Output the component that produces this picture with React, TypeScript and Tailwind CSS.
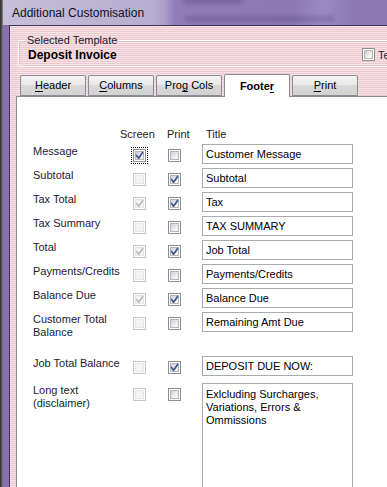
import React from "react";

type Box = { c?: boolean; d?: boolean; focus?: boolean };

type Row = {
  label: string[];
  screen: Box;
  print: Box;
  title: string;
  h: string;
};

const rows: Row[] = [
  { label: ["Message"], screen: { c: true, focus: true }, print: {}, title: "Customer Message", h: "h-[24px]" },
  { label: ["Subtotal"], screen: { d: true }, print: { c: true }, title: "Subtotal", h: "h-[24px]" },
  { label: ["Tax Total"], screen: { c: true, d: true }, print: { c: true }, title: "Tax", h: "h-[24px]" },
  { label: ["Tax Summary"], screen: { d: true }, print: {}, title: "TAX SUMMARY", h: "h-[24px]" },
  { label: ["Total"], screen: { c: true, d: true }, print: { c: true }, title: "Job Total", h: "h-[24px]" },
  { label: ["Payments/Credits"], screen: { d: true }, print: {}, title: "Payments/Credits", h: "h-[24px]" },
  { label: ["Balance Due"], screen: { c: true, d: true }, print: { c: true }, title: "Balance Due", h: "h-[24px]" },
  { label: ["Customer Total", "Balance"], screen: { d: true }, print: {}, title: "Remaining Amt Due", h: "h-[44px]" },
  { label: ["Job Total Balance"], screen: { d: true }, print: { c: true }, title: "DEPOSIT DUE NOW:", h: "h-[27px]" },
];

const stripes =
  "bg-[image:repeating-linear-gradient(to_bottom,#f8e3e6_0px,#f8e3e6_1px,#ecc9ce_1px,#ecc9ce_2px)] bg-fixed";

function Check({ c, d, focus }: Box) {
  return (
    <span
      className={`relative block w-[13px] h-[13px] border p-[1px] ${
        d ? "border-[#c6c6c6] bg-[#fbfbfb]" : "border-[#8e8f8f] bg-white"
      } ${focus ? "outline-1 outline-dotted outline-black outline-offset-[1px]" : ""}`}
    >
      <span
        className={`block w-full h-full border ${
          d
            ? "border-[#e6e6e6] bg-[#f4f4f4]"
            : "border-[#b4b6b9] bg-[linear-gradient(135deg,#cdd0d5,#eeeeee_60%,#f7f7f7)]"
        }`}
      />
      {c && (
        <svg viewBox="0 0 13 13" className="absolute -inset-px w-[13px] h-[13px]">
          <path
            d="M3.5 6.5 L5.6 9.2 L9.6 3.4"
            fill="none"
            stroke={d ? "#bdbdbd" : "#3c5394"}
            strokeWidth="1.7"
            strokeLinecap="round"
            strokeLinejoin="round"
          />
        </svg>
      )}
    </span>
  );
}

function Tab({ children, active }: { children: React.ReactNode; active?: boolean }) {
  return (
    <div
      className={`w-[66px] shrink-0 flex items-center justify-center border border-[#898c95] rounded-t-[2px] text-[11px] leading-[13px] text-black ${
        active
          ? "h-[23px] bg-white border-b-0 font-bold relative z-10 -mb-px"
          : "h-[21px] bg-[linear-gradient(to_bottom,#f4f4f4,#e9e9e9_45%,#d9d9d9_50%,#d2d2d2)]"
      }`}
    >
      <span>{children}</span>
    </div>
  );
}

export default function App() {
  return (
    <div className="w-[387px] h-[487px] overflow-hidden flex font-['Liberation_Sans',Arial,sans-serif] text-[#1b1b30]">
      {/* outer window edge */}
      <div className="w-[3px] shrink-0 bg-[linear-gradient(to_right,#2f2f2f,#555_66%,#9a93a8)]" />

      <div className="flex-1 flex flex-col min-w-0">
        {/* title bar */}
        <div className="relative h-[25px] shrink-0 flex items-center pl-[9px] bg-[linear-gradient(to_right,#c6bfda_0px,#b7add0_150px,#ab9fca_162px,#8f7bb6_172px,#8c78b3_290px,#9a8bc6_320px,#8c78b3_350px)] overflow-hidden">
          <div className="absolute left-[180px] -top-[2px] w-[60px] h-[6px] rounded-full bg-[#5a4a7e] opacity-40 blur-[2px]" />
          <div className="absolute left-[182px] top-[16px] w-[150px] h-[6px] rounded-full bg-[#5a4a7e] opacity-35 blur-[2px]" />
          <span className="relative text-[12px] leading-[14px] text-[#111122]">Additional Customisation</span>
        </div>

        <div className="flex flex-1 min-h-0">
          {/* purple frame */}
          <div className="w-[7px] shrink-0 bg-[#8a6fae] border-r border-[#3e3556]" />

          {/* dialog body */}
          <div className={`flex-1 min-w-0 flex flex-col border-t border-[#3e3556] pl-[6px] ${stripes}`}>
            {/* Selected Template group */}
            <div className="relative shrink-0 mt-[14px] ml-[2px] w-[420px] h-[27px] border border-[#fbfbfb] rounded-[3px] shadow-[inset_1px_1px_0_#d9c3c7] flex pl-[9px] pt-[8px]">
              <span className={`absolute -top-[7px] left-[7px] px-[1px] text-[11px] leading-[13px] ${stripes}`}>
                Selected Template
              </span>
              <span className="w-[334px] shrink-0 text-[12px] leading-[13px] font-bold text-black">
                Deposit Invoice
              </span>
              <span className="-mt-[1px]">
                <span className="block w-[13px] h-[13px] border border-[#8e8f8f] bg-white p-[1px]">
                  <span className="block w-full h-full border border-[#b4b6b9] bg-[linear-gradient(135deg,#cdd0d5,#eeeeee_60%,#f7f7f7)]" />
                </span>
              </span>
              <span className="ml-[3px] text-[11px] leading-[13px] whitespace-nowrap">Te</span>
            </div>

            {/* tabs */}
            <div className="flex shrink-0 items-end gap-[2px] ml-[4px] mt-[7px]">
              <Tab>
                <span className="underline underline-offset-2">H</span>eader
              </Tab>
              <Tab>
                <span className="underline underline-offset-2">C</span>olumns
              </Tab>
              <Tab>
                Pro<span className="underline underline-offset-2">g</span> Cols
              </Tab>
              <Tab active>
                Foote<span className="underline underline-offset-2">r</span>
              </Tab>
              <Tab>
                <span className="underline underline-offset-2">P</span>rint
              </Tab>
            </div>

            {/* tab panel */}
            <div className="flex-1 shrink-0 bg-white border-t border-l border-[#898c95] pl-[16px] pt-[31px] text-[11px] leading-[13px]">
              <div className="flex h-[13px] mb-[3px]">
                <span className="w-[87px]" />
                <span className="w-[47px]">Screen</span>
                <span className="w-[39px]">Print</span>
                <span>Title</span>
              </div>

              {rows.map((r) => (
                <div key={r.title} className={`flex ${r.h}`}>
                  <div className="w-[100px] pt-[1px]">
                    {r.label.map((l) => (
                      <div key={l}>{l}</div>
                    ))}
                  </div>
                  <div className="w-[35px] pt-[5px]">
                    <Check {...r.screen} />
                  </div>
                  <div className="w-[34px] pt-[5px]">
                    <Check {...r.print} />
                  </div>
                  <div className="w-[151px] h-[20px] border border-[#a9abb0] flex items-center pl-[3px] pt-px text-black">
                    {r.title}
                  </div>
                </div>
              ))}

              <div className="flex">
                <div className="w-[100px] pt-[1px]">
                  <div>Long text</div>
                  <div>(disclaimer)</div>
                </div>
                <div className="w-[35px] pt-[5px]">
                  <Check d />
                </div>
                <div className="w-[34px] pt-[5px]">
                  <Check />
                </div>
                <div className="w-[151px] h-[110px] border border-[#a9abb0] pl-[3px] pt-[4px] text-black">
                  <div>Exlcluding Surcharges,</div>
                  <div>Variations, Errors &amp;</div>
                  <div>Ommissions</div>
                </div>
              </div>
            </div>
          </div>
        </div>
      </div>
    </div>
  );
}
